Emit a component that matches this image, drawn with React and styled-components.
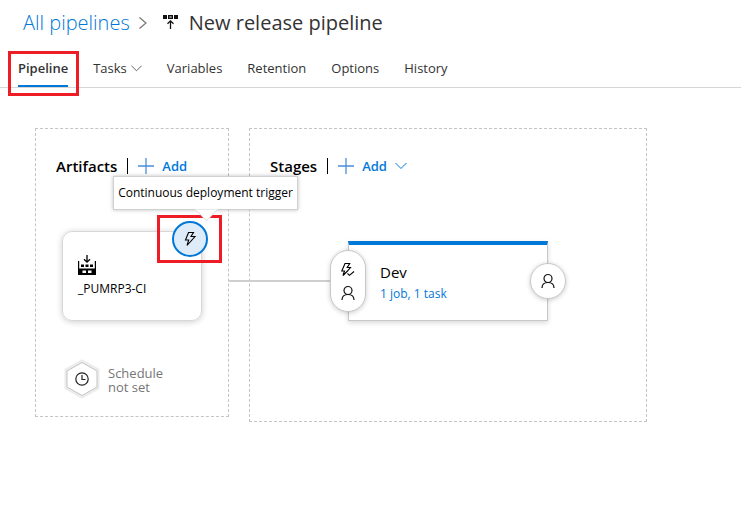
import React from 'react';
import styled, { createGlobalStyle } from 'styled-components';

const BLUE = '#0078d7';
const RED = '#ee1c25';

const GlobalStyle = createGlobalStyle`
  * { box-sizing: border-box; }
  body {
    margin: 0;
    background: #fff;
    color: #222;
    font-family: 'Segoe UI', 'Open Sans', 'Noto Sans', sans-serif;
    font-size: 13px;
    line-height: 20px;
  }
  button { font: inherit; color: inherit; background: none; border: 0; padding: 0; cursor: pointer; }
  a { text-decoration: none; color: ${BLUE}; }
  svg { display: block; flex: none; }
  h1, h2, p { margin: 0; }
`;

const Header = styled.header`
  display: flex;
  align-items: center;
  height: 46px;
  padding: 0 23px;
  font-size: 20px;
  line-height: 28px;
  white-space: nowrap;
`;

const Crumb = styled.a`
  font-weight: 300;
`;

const CrumbArrow = styled.span`
  padding: 0 15px 0 8px;
`;

const Title = styled.h1`
  margin-left: 11px;
  font-size: 20px;
  font-weight: 400;
  color: #333;
`;

const Tabs = styled.nav`
  display: flex;
  gap: 25px;
  height: 42px;
  padding: 0 18px;
  border-bottom: 1px solid #d6d6d6;
`;

const Tab = styled.button`
  position: relative;
  display: flex;
  align-items: center;
  gap: 4px;
  height: 41px;
  padding-top: 3px;
  color: #333;
  font-weight: ${(p) => (p.$active ? 600 : 400)};
  border-top: 2px solid transparent;
  border-bottom: 2px solid ${(p) => (p.$active ? BLUE : 'transparent')};
`;

const Highlight = styled.span`
  position: absolute;
  inset: ${(p) => p.$inset};
  border: 3px solid ${RED};
  pointer-events: none;
`;

const Canvas = styled.main`
  display: flex;
  align-items: flex-start;
  gap: 20px;
  padding: 40px 94px 40px 35px;
`;

const Panel = styled.section`
  flex: ${(p) => (p.$grow ? '1 1 0' : '0 0 194px')};
  padding: 27px 20px ${(p) => (p.$grow ? 100 : 17)}px;
  border: 1px dashed #c4c4c4;
`;

const PanelHead = styled.div`
  display: flex;
  align-items: center;
  height: 20px;
`;

const PanelTitle = styled.h2`
  padding-right: 10px;
  font-size: 15px;
  font-weight: 600;
  color: #000;
`;

const AddButton = styled.button`
  display: flex;
  align-items: center;
  gap: 8px;
  height: 16px;
  padding-left: 10px;
  border-left: 1px solid #000;
  color: ${BLUE};
  font-weight: 600;
`;

const ArtifactCard = styled.article`
  position: relative;
  width: 140px;
  height: 90px;
  margin: 55px 0 0 6px;
  padding: 23px 15px;
  border: 1px solid #d8d8d8;
  border-radius: 10px;
  box-shadow: 0 1px 6px rgba(0, 0, 0, 0.2);
  color: #000;
`;

const ArtifactName = styled.p`
  margin-top: 4px;
  font-size: 12px;
`;

const Trigger = styled.button`
  position: absolute;
  top: -11px;
  right: -7px;
  display: grid;
  place-items: center;
  width: 36px;
  height: 36px;
  border: 2px solid ${BLUE};
  border-radius: 50%;
  background: #deecf9;
  color: #000;
`;

const Tooltip = styled.div`
  position: absolute;
  z-index: 2;
  top: -56px;
  left: 50px;
  display: grid;
  place-items: center;
  width: 185px;
  height: 34px;
  background: #fff;
  border: 1px solid #d0d0d0;
  box-shadow: 0 0 4px rgba(0, 0, 0, 0.25);
  font-size: 12px;
  white-space: nowrap;

  &::after {
    content: '';
    position: absolute;
    bottom: -9px;
    left: 84px;
    width: 16px;
    height: 16px;
    background: #fff;
    border: solid #ddd;
    border-width: 0 1px 1px 0;
    transform: rotate(45deg);
    clip-path: polygon(100% 0, 100% 100%, 0 100%);
  }
`;

const Schedule = styled.button`
  display: flex;
  align-items: center;
  gap: 8px;
  margin: 38px 0 0 8px;
  color: #767676;
  text-align: left;
  line-height: 14px;
`;

const ScheduleText = styled.span`
  padding-top: 2px;
`;

const StageCard = styled.article`
  position: relative;
  width: 200px;
  max-width: 100%;
  height: 80px;
  margin: 65px 0 0 78px;
  padding: 15px 31px;
  border: 1px solid #c8c8c8;
  border-top: 4px solid ${BLUE};
  box-shadow: 0 2px 5px rgba(0, 0, 0, 0.15);

  &::before {
    content: '';
    position: absolute;
    right: 100%;
    top: 35px;
    width: 120px;
    height: 2px;
    background: #cfcfcf;
  }
`;

const StageName = styled.p`
  font-size: 15px;
  line-height: 24px;
  color: #000;
`;

const StageLink = styled.a`
  display: block;
  font-size: 12px;
`;

const Conditions = styled.button`
  position: absolute;
  top: ${(p) => (p.$right ? 18 : 5)}px;
  ${(p) => (p.$right ? 'right: -19px;' : 'left: -19px;')}
  display: flex;
  flex-direction: column;
  align-items: center;
  justify-content: center;
  gap: 7px;
  width: 36px;
  height: ${(p) => (p.$right ? 36 : 62)}px;
  border: 1px solid #c8c8c8;
  border-radius: 18px;
  background: #fff;
  box-shadow: 0 1px 5px rgba(0, 0, 0, 0.2);
  color: #000;
`;

const Plus = () => (
  <svg width="16" height="16" viewBox="0 0 16 16" stroke="#4b8fdb" strokeWidth="1.3" aria-hidden="true">
    <path d="M8 0V16M0 8H16" />
  </svg>
);

const Chevron = ({ size = 11, color = '#555' }) => (
  <svg width={size} height={size} viewBox="0 0 12 12" fill="none" stroke={color} aria-hidden="true">
    <path d="M0.5 3L6 8.5L11.5 3" />
  </svg>
);

const ReleaseIcon = () => (
  <svg width="15" height="16" viewBox="0 0 15 16" fill="none" stroke="#111" aria-hidden="true">
    <path d="M0 0h4v4H0zM11 0h4v4h-4z" fill="#111" stroke="none" />
    <path d="M5.7 0.7h3.6v2.6H5.7z" strokeWidth="1.4" />
    <path d="M7.5 14V6M4.5 8.8L7.5 5.8L10.5 8.8" strokeWidth="1.3" />
  </svg>
);

const BuildIcon = () => (
  <svg width="18" height="20" viewBox="0 0 18 20" fill="none" stroke="#000" aria-hidden="true">
    <path d="M9 0V7M6 4.2L9 7.2L12 4.2" strokeWidth="1.3" />
    <path
      d="M0 6h1.2v7.5h15.6V6H18v14H0zM4.5 15.5v2.5h3.5v-2.5zM10 15.5v2.5h3.5v-2.5z"
      fill="#000"
      fillRule="evenodd"
      stroke="none"
    />
    <path d="M3 9.5h3v2.5H3zM7.5 9.5h3v2.5h-3zM12 9.5h3v2.5h-3z" fill="#000" stroke="none" />
  </svg>
);

const Bolt = () => (
  <svg width="14" height="16" viewBox="0 0 14 16" fill="none" stroke="#000" strokeWidth="1.1" aria-hidden="true">
    <path d="M5.5 1.5H10.5L8 5.5H12L4 14.5L5.7 9H2.5Z" />
  </svg>
);

const BoltCheck = () => (
  <svg width="16" height="16" viewBox="0 0 16 16" fill="none" stroke="#000" strokeWidth="1.1" aria-hidden="true">
    <path d="M8 8.5L3 13.5L4.5 9H1.8L5 1.5H9.7L7.2 5.5H10.5L7.8 8.7" />
    <path d="M7.5 11.5L9.5 13.3L14 9.5" />
  </svg>
);

const Person = () => (
  <svg width="14" height="16" viewBox="0 0 14 16" fill="none" stroke="#111" strokeWidth="1.2" aria-hidden="true">
    <circle cx="7" cy="5.5" r="4" />
    <path d="M1 15C1 11.5 3.5 9.5 7 9.5S13 11.5 13 15" />
  </svg>
);

const ScheduleIcon = () => (
  <svg width="36" height="40" viewBox="0 0 36 40" fill="none" aria-hidden="true">
    <path d="M18 2L34 11V29L18 38L2 29V11Z" stroke="#ececec" strokeWidth="3" />
    <path d="M18 3.5L33 12V28L18 36.5L3 28V12Z" fill="#fff" stroke="#c4c4c4" />
    <circle cx="18" cy="20" r="6.2" stroke="#222" strokeWidth="1.2" />
    <path d="M18 16V20.5H21.5" stroke="#222" strokeWidth="1.2" />
  </svg>
);

const TABS = ['Pipeline', 'Tasks', 'Variables', 'Retention', 'Options', 'History'];

export default function App() {
  return (
    <>
      <GlobalStyle />
      <Header>
        <Crumb href="#pipelines">All pipelines</Crumb>
        <CrumbArrow>
          <svg width="10" height="14" viewBox="0 0 10 14" fill="none" stroke="#777" strokeWidth="1.2" aria-hidden="true">
            <path d="M1.5 1.5L8 7L1.5 12.5" />
          </svg>
        </CrumbArrow>
        <ReleaseIcon />
        <Title>New release pipeline</Title>
      </Header>
      <Tabs>
        {TABS.map((name) => (
          <Tab key={name} type="button" $active={name === 'Pipeline'}>
            {name}
            {name === 'Tasks' && <Chevron />}
            {name === 'Pipeline' && <Highlight $inset="3px -11px -11px -10px" />}
          </Tab>
        ))}
      </Tabs>
      <Canvas>
        <Panel>
          <PanelHead>
            <PanelTitle>Artifacts</PanelTitle>
            <AddButton type="button">
              <Plus />
              Add
            </AddButton>
          </PanelHead>
          <ArtifactCard>
            <BuildIcon />
            <ArtifactName>_PUMRP3-CI</ArtifactName>
            <Tooltip role="tooltip" id="trigger-tip">Continuous deployment trigger</Tooltip>
            <Trigger type="button" aria-labelledby="trigger-tip">
              <Bolt />
              <Highlight $inset="-8px -16px -8px -17px" />
            </Trigger>
          </ArtifactCard>
          <Schedule type="button">
            <ScheduleIcon />
            <ScheduleText>
              Schedule
              <br />
              not set
            </ScheduleText>
          </Schedule>
        </Panel>
        <Panel $grow>
          <PanelHead>
            <PanelTitle>Stages</PanelTitle>
            <AddButton type="button">
              <Plus />
              Add
              <Chevron size={12} color={BLUE} />
            </AddButton>
          </PanelHead>
          <StageCard>
            <Conditions type="button" aria-label="Pre-deployment conditions">
              <BoltCheck />
              <Person />
            </Conditions>
            <StageName>Dev</StageName>
            <StageLink href="#tasks">1 job, 1 task</StageLink>
            <Conditions type="button" aria-label="Post-deployment conditions" $right>
              <Person />
            </Conditions>
          </StageCard>
        </Panel>
      </Canvas>
    </>
  );
}
